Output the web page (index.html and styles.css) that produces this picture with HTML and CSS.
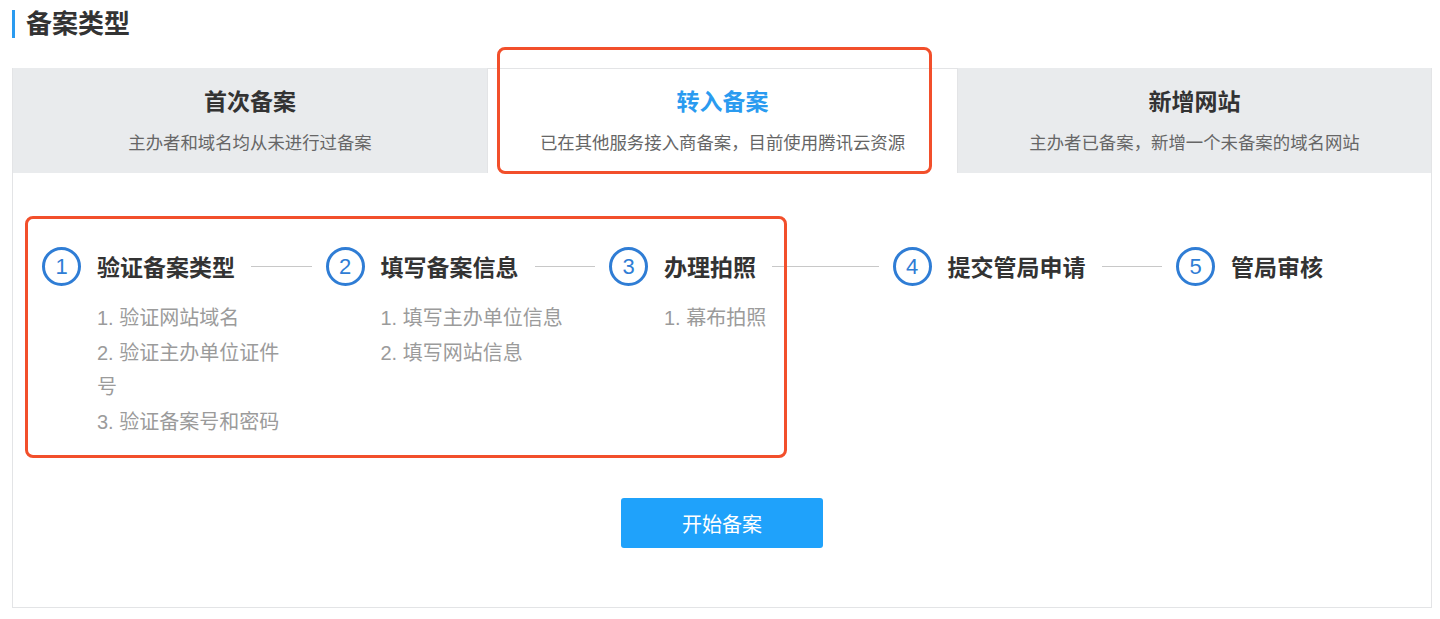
FILE: index.html
```html
<!DOCTYPE html>
<html lang="zh-CN">

<head>
    <meta charset="UTF-8">
    <meta name="viewport" content="width=device-width, initial-scale=1.0">
    <title>备案类型</title>
    <link rel="stylesheet" href="styles.css">
</head>

<body>
    <div class="page">
        <h2 class="section-title">备案类型</h2>

        <div class="panel">
            <!-- Type tabs -->
            <div class="tabs">
                <div class="tab">
                    <div class="tab-title">首次备案</div>
                    <div class="tab-desc">主办者和域名均从未进行过备案</div>
                </div>
                <div class="tab active">
                    <div class="tab-title">转入备案</div>
                    <div class="tab-desc">已在其他服务接入商备案，目前使用腾讯云资源</div>
                </div>
                <div class="tab">
                    <div class="tab-title">新增网站</div>
                    <div class="tab-desc">主办者已备案，新增一个未备案的域名网站</div>
                </div>
            </div>

            <!-- Steps -->
            <div class="steps">
                <div class="step">
                    <div class="step-head">
                        <span class="step-num">1</span>
                        <span class="step-title">验证备案类型</span>
                        <span class="step-line"></span>
                    </div>
                    <ul class="step-list">
                        <li>1. 验证网站域名</li>
                        <li>2. 验证主办单位证件号</li>
                        <li>3. 验证备案号和密码</li>
                    </ul>
                </div>
                <div class="step">
                    <div class="step-head">
                        <span class="step-num">2</span>
                        <span class="step-title">填写备案信息</span>
                        <span class="step-line"></span>
                    </div>
                    <ul class="step-list">
                        <li>1. 填写主办单位信息</li>
                        <li>2. 填写网站信息</li>
                    </ul>
                </div>
                <div class="step">
                    <div class="step-head">
                        <span class="step-num">3</span>
                        <span class="step-title">办理拍照</span>
                        <span class="step-line"></span>
                    </div>
                    <ul class="step-list">
                        <li>1. 幕布拍照</li>
                    </ul>
                </div>
                <div class="step">
                    <div class="step-head">
                        <span class="step-num">4</span>
                        <span class="step-title">提交管局申请</span>
                        <span class="step-line"></span>
                    </div>
                </div>
                <div class="step">
                    <div class="step-head">
                        <span class="step-num">5</span>
                        <span class="step-title">管局审核</span>
                    </div>
                </div>
            </div>

            <div class="actions">
                <button class="btn-primary">开始备案</button>
            </div>
        </div>
    </div>

    <!-- Annotation boxes -->
    <div class="mark mark-tab"></div>
    <div class="mark mark-steps"></div>
</body>

</html>
```

FILE: styles.css
```css
* {
    box-sizing: border-box;
}

body {
    margin: 0;
    padding: 0;
    position: relative;
    font-family: "Liberation Sans", "Noto Sans CJK SC", sans-serif;
    color: #333;
    background: #fff;
}

.page {
    padding: 10px 8px 0 12px;
}

.section-title {
    margin: 0;
    height: 28px;
    line-height: 28px;
    padding-left: 11px;
    border-left: 3px solid #2a9bf0;
    font-size: 26px;
    font-weight: bold;
    color: #333;
}

.panel {
    margin-top: 30px;
    height: 540px;
    border: 1px solid #e3e4e6;
    border-top: none;
}

.tabs {
    display: grid;
    grid-template-columns: 474px 471px 1fr;
    height: 105px;
}

.tab {
    background: #e9ebed;
    text-align: center;
    padding-top: 19px;
}

.tab.active {
    background: #fff;
    border: 1px solid #e3e4e6;
    border-bottom: none;
    padding-top: 18px;
}

.tab-title {
    font-size: 23px;
    font-weight: bold;
    line-height: 30px;
    color: #333;
}

.tab.active .tab-title {
    color: #2a9bf0;
}

.tab-desc {
    margin-top: 14px;
    font-size: 17.4px;
    line-height: 24px;
    color: #666;
}

.steps {
    display: flex;
    padding: 73px 0 0 29px;
    height: 325px;
}

.step {
    width: 283.5px;
    flex-shrink: 0;
}

.step-head {
    display: flex;
    align-items: center;
    height: 40px;
}

.step-num {
    width: 39px;
    height: 39px;
    flex-shrink: 0;
    border: 3px solid #2f7dd5;
    border-radius: 50%;
    color: #2f7dd5;
    font-size: 22px;
    line-height: 33px;
    text-align: center;
}

.step-title {
    margin-left: 16px;
    font-size: 23px;
    font-weight: bold;
    color: #333;
    white-space: nowrap;
}

.step-line {
    flex: 1;
    height: 1px;
    margin: 0 14px 0 16px;
    background: #c8c8c8;
}

.step-list {
    list-style: none;
    margin: 15px 0 0 55px;
    padding: 0;
    width: 195px;
    font-size: 20px;
    line-height: 34.6px;
    color: #9b9b9b;
}

.actions {
    display: flex;
    justify-content: center;
}

.btn-primary {
    width: 202px;
    height: 50px;
    border: none;
    border-radius: 3px;
    background: #1fa2fb;
    color: #fff;
    font-family: "Liberation Sans", "Noto Sans CJK SC", sans-serif;
    font-size: 20px;
    cursor: pointer;
}

.mark {
    position: absolute;
    border: 3px solid #f24f2b;
    border-radius: 8px;
}

.mark-tab {
    left: 497px;
    top: 47px;
    width: 435px;
    height: 127px;
}

.mark-steps {
    left: 25px;
    top: 216px;
    width: 762px;
    height: 242px;
}
```
